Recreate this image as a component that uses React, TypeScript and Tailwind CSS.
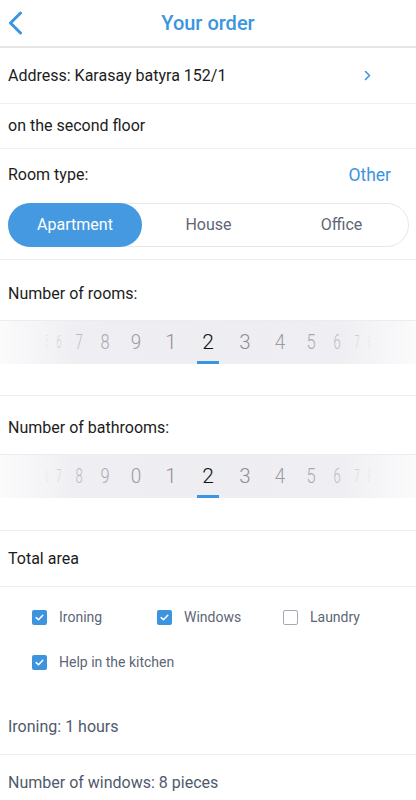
import React from "react";

const ROOMS = ["5", "6", "7", "8", "9", "1", "2", "3", "4", "5", "6", "7", "8"];
const BATHS = ["6", "7", "8", "9", "0", "1", "2", "3", "4", "5", "6", "7", "8"];

function Picker({ items }: { items: string[] }) {
  const R = 165;
  const step = (12.9 * Math.PI) / 180;
  return (
    <div className="relative h-[44px] w-full border-t border-[#ececf0] bg-[linear-gradient(to_right,#fbfbfc_0%,#efeff3_18%,#ededf2_50%,#efeff3_82%,#fbfbfc_100%)] overflow-hidden">
      {items.map((d, i) => {
        const k = i - 6;
        const th = k * step;
        const x = 208 + R * Math.sin(th);
        const c = Math.cos(th);
        const sel = k === 0;
        const op = sel ? 1 : Math.max(0.12, Math.pow(c, 1.3) * 0.85);
        return (
          <span
            key={i}
            className="absolute top-0 h-[44px] w-[20px] flex items-center justify-center text-[21px] font-light"
            style={{
              left: x - 10,
              transform: `scale(${c}, ${0.8 + 0.2 * c})`,
              color: sel ? "#111" : "#7d7d82",
              opacity: op,
              fontFamily: "Roboto, sans-serif",
            }}
          >
            {d}
          </span>
        );
      })}
      <div className="absolute bottom-0 left-[197px] h-[3px] w-[22px] bg-[#3b95e0]" />
    </div>
  );
}

function Check({ checked, label }: { checked: boolean; label: string }) {
  return (
    <div className="flex items-center gap-[12px]">
      {checked ? (
        <div className="w-[15px] h-[15px] rounded-[2px] bg-[#3d94de] flex items-center justify-center">
          <svg width="9" height="7" viewBox="0 0 9 7" fill="none">
            <path d="M1.2 3.6 L3.5 5.8 L7.8 1.2" stroke="white" strokeWidth="1.5" strokeLinecap="round" strokeLinejoin="round" />
          </svg>
        </div>
      ) : (
        <div className="w-[15px] h-[15px] rounded-[2px] border-[1.5px] border-[#a3abb8] bg-white" />
      )}
      <span className="text-[14px] text-[#5d6677]">{label}</span>
    </div>
  );
}

export default function App() {
  return (
    <div className="w-[416px] h-[800px] overflow-hidden bg-white text-[#1c1c1c]" style={{ fontFamily: "Roboto, 'Liberation Sans', sans-serif" }}>
      <div className="relative h-[48px] flex items-center justify-center border-b-2 border-[#e6e6e6]">
        <svg className="absolute left-[8px] top-[11px]" width="15" height="24" viewBox="0 0 15 24" fill="none">
          <path d="M12.5 2 L2.5 12 L12.5 22" stroke="#3b95e0" strokeWidth="3" strokeLinecap="round" strokeLinejoin="round" />
        </svg>
        <span className="text-[20px] font-medium text-[#3b95e0]">Your order</span>
      </div>
      <div className="h-[56px] flex items-center justify-between px-[8px] border-b border-[#f0f0f0]">
        <span className="text-[16px]">Address: Karasay batyra 152/1</span>
        <svg className="mr-[37px]" width="7" height="11" viewBox="0 0 7 11" fill="none">
          <path d="M1.5 1.5 L5.5 5.5 L1.5 9.5" stroke="#3b95e0" strokeWidth="1.6" strokeLinecap="round" strokeLinejoin="round" />
        </svg>
      </div>
      <div className="h-[45px] flex items-center px-[8px] border-b border-[#f0f0f0]">
        <span className="text-[16px]">on the second floor</span>
      </div>
      <div className="px-[8px] pb-[12px] border-b border-[#efeff2]">
        <div className="h-[52px] flex items-center justify-between">
          <span className="text-[16px]">Room type:</span>
          <span className="text-[17.5px] text-[#3b95e0] mr-[17px]">Other</span>
        </div>
        <div className="mt-[2px] h-[44px] w-[401px] rounded-full border border-[#e6e8ee] flex items-center">
          <div className="h-[44px] -ml-px -my-px w-[134px] rounded-full bg-[#4599e0] flex items-center justify-center text-[16px] text-white">Apartment</div>
          <div className="flex-1 text-center text-[16px] text-[#5e6676]">House</div>
          <div className="flex-1 text-center text-[16px] text-[#5e6676]">Office</div>
        </div>
      </div>
      <div className="pt-[23px] pb-[31px] border-b border-[#efeff2]">
        <div className="px-[8px] h-[22px] flex items-center text-[16px]">Number of rooms:</div>
        <div className="mt-[15px]"><Picker items={ROOMS} /></div>
      </div>
      <div className="pt-[21px] pb-[32px] border-b border-[#efeff2]">
        <div className="px-[8px] h-[22px] flex items-center text-[16px]">Number of bathrooms:</div>
        <div className="mt-[15px]"><Picker items={BATHS} /></div>
      </div>
      <div className="h-[56px] flex items-center px-[8px] border-b border-[#efeff2]">
        <span className="text-[16px]">Total area</span>
      </div>
      <div className="pt-[8px] pb-[15px] pl-[32px]">
        <div className="h-[45px] flex items-center">
          <div className="w-[125px]"><Check checked label="Ironing" /></div>
          <div className="w-[126px]"><Check checked label="Windows" /></div>
          <Check checked={false} label="Laundry" />
        </div>
        <div className="h-[45px] flex items-center">
          <Check checked label="Help in the kitchen" />
        </div>
      </div>
      <div className="h-[55px] flex items-center px-[8px] border-b border-[#efeff2] text-[16px] text-[#4f5a6c]">Ironing: 1 hours</div>
      <div className="h-[56px] flex items-center px-[8px] text-[16px] text-[#4f5a6c]">Number of windows: 8 pieces</div>
    </div>
  );
}
